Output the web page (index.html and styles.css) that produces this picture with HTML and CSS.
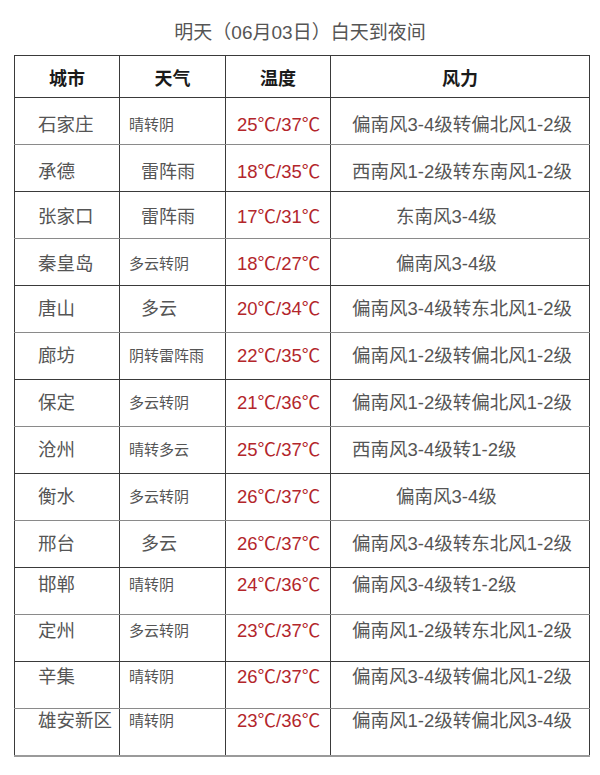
FILE: index.html
```html
<!DOCTYPE html>
<html lang="zh-CN">
<head>
<meta charset="utf-8">
<title>明天（06月03日）白天到夜间</title>
<link rel="stylesheet" href="styles.css">
</head>
<body>
<div class="title">明天（06月03日）白天到夜间</div>
<table class="wx">
  <colgroup>
    <col class="c1"><col class="c2"><col class="c3"><col class="c4">
  </colgroup>
  <thead>
    <tr><th>城市</th><th>天气</th><th>温度</th><th>风力</th></tr>
  </thead>
  <tbody>
    <tr class="dn4"><td class="city">石家庄</td><td class="w sm">晴转阴</td><td class="t">25℃/37℃</td><td class="wind">偏南风3-4级转偏北风1-2级</td></tr>
    <tr class="dn4"><td class="city">承德</td><td class="w lg">雷阵雨</td><td class="t">18℃/35℃</td><td class="wind">西南风1-2级转东南风1-2级</td></tr>
    <tr class="dn2"><td class="city">张家口</td><td class="w lg">雷阵雨</td><td class="t">17℃/31℃</td><td class="wind short">东南风3-4级</td></tr>
    <tr class="dn2"><td class="city">秦皇岛</td><td class="w sm">多云转阴</td><td class="t">18℃/27℃</td><td class="wind short">偏南风3-4级</td></tr>
    <tr><td class="city">唐山</td><td class="w lg">多云</td><td class="t">20℃/34℃</td><td class="wind">偏南风3-4级转东北风1-2级</td></tr>
    <tr><td class="city">廊坊</td><td class="w sm">阴转雷阵雨</td><td class="t">22℃/35℃</td><td class="wind">偏南风1-2级转偏北风1-2级</td></tr>
    <tr><td class="city">保定</td><td class="w sm">多云转阴</td><td class="t">21℃/36℃</td><td class="wind">偏南风1-2级转偏北风1-2级</td></tr>
    <tr><td class="city">沧州</td><td class="w sm">晴转多云</td><td class="t">25℃/37℃</td><td class="wind">西南风3-4级转1-2级</td></tr>
    <tr><td class="city">衡水</td><td class="w sm">多云转阴</td><td class="t">26℃/37℃</td><td class="wind short">偏南风3-4级</td></tr>
    <tr><td class="city">邢台</td><td class="w lg">多云</td><td class="t">26℃/37℃</td><td class="wind">偏南风3-4级转东北风1-2级</td></tr>
    <tr class="up6"><td class="city">邯郸</td><td class="w sm">晴转阴</td><td class="t">24℃/36℃</td><td class="wind">偏南风3-4级转1-2级</td></tr>
    <tr class="up7"><td class="city">定州</td><td class="w sm">多云转阴</td><td class="t">23℃/37℃</td><td class="wind">偏南风1-2级转东北风1-2级</td></tr>
    <tr class="up8"><td class="city">辛集</td><td class="w sm">晴转阴</td><td class="t">26℃/37℃</td><td class="wind">偏南风3-4级转偏北风1-2级</td></tr>
    <tr class="up11 last"><td class="city">雄安新区</td><td class="w sm">晴转阴</td><td class="t">23℃/36℃</td><td class="wind">偏南风1-2级转偏北风3-4级</td></tr>
  </tbody>
</table>
</body>
</html>
```
FILE: styles.css
```css
html, body {
  margin: 0;
  padding: 0;
  background: #ffffff;
}
body {
  width: 600px;
  height: 775px;
  overflow: hidden;
  font-family: "Liberation Sans", "Noto Sans CJK SC", sans-serif;
  color: #555555;
}
.title {
  box-sizing: border-box;
  height: 55px;
  padding-top: 21px;
  line-height: 24px;
  font-size: 19px;
  text-align: center;
  color: #555555;
}
.wx {
  margin-left: 14px;
  width: 575px;
  border-collapse: collapse;
  table-layout: fixed;
}
.c1 { width: 105px; }
.c2 { width: 106px; }
.c3 { width: 105px; }
.c4 { width: 259px; }
.wx th, .wx td {
  border: 1px solid #3a3a3a;
  padding: 0;
  white-space: nowrap;
  overflow: hidden;
}
.wx th {
  height: 41px;
  font-family: "Noto Sans CJK SC", sans-serif;
  font-weight: 700;
  font-size: 18px;
  color: #1a1a1a;
  text-align: center;
  vertical-align: middle;
}
.wx tbody tr {
  height: 47px;
}
.wx td {
  vertical-align: middle;
  text-align: left;
  font-size: 18.5px;
  line-height: 24px;
}
.wx tbody tr:nth-child(odd) td {
  border-bottom-color: #8a8a8a;
}
.wx tr.last td {
  border-bottom: 2px solid #9a9a9a;
}
.city {
  padding-left: 23px !important;
}
.w.sm {
  font-size: 15px;
  padding-left: 9px !important;
}
.w.lg {
  font-size: 18px;
  padding-left: 21px !important;
}
.t {
  color: #b3262b;
  padding-left: 11px !important;
}
.wind {
  padding-left: 21px !important;
}
.wind.short {
  padding-left: 65px !important;
}
.dn4 td { padding-top: 8px !important; }
.dn2 td { padding-top: 4px !important; }
.up6 td { padding-bottom: 12px !important; }
.up7 td { padding-bottom: 14px !important; }
.up8 td { padding-bottom: 16px !important; }
.up11 td { padding-bottom: 22px !important; }
```
